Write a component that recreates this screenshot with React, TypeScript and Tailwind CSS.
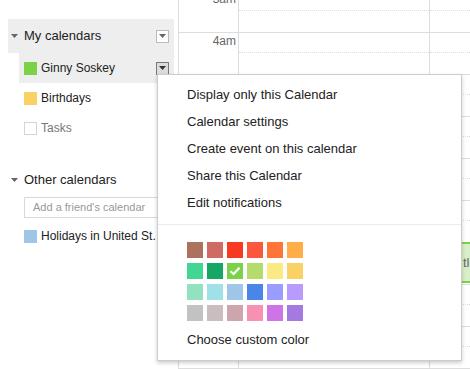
const swatches = [
  ["#ac725e", "#d06b64", "#f83a22", "#fa573c", "#ff7537", "#ffad46"],
  ["#42d692", "#16a765", "#7bd148", "#b3dc6c", "#fbe983", "#fad165"],
  ["#92e1c0", "#9fe1e7", "#9fc6e7", "#4986e7", "#9a9cff", "#b99aff"],
  ["#c2c2c2", "#cabdbf", "#cca6ac", "#f691b2", "#cd74e6", "#a47ae2"],
];

const menuItems = [
  "Display only this Calendar",
  "Calendar settings",
  "Create event on this calendar",
  "Share this Calendar",
  "Edit notifications",
];

const hours = ["3am", "4am", "5am", "6am", "7am", "8am", "9am", "10am", "11am", "12pm"];

function Caret() {
  return (
    <svg width="7" height="4" viewBox="0 0 7 4" className="shrink-0">
      <path d="M0 0h7L3.5 4z" fill="#666" />
    </svg>
  );
}

function DropButton({ active }: { active?: boolean }) {
  return (
    <div
      className={
        active
          ? "flex h-[13px] w-[13px] items-center justify-center border border-[#777] bg-[#dcdcdc]"
          : "flex h-[13px] w-[13px] items-center justify-center border border-[#bbb] bg-white"
      }
    >
      <svg width="7" height="4" viewBox="0 0 7 4">
        <path d="M0 0h7L3.5 4z" fill={active ? "#333" : "#666"} />
      </svg>
    </div>
  );
}

function CalRow({
  color,
  label,
  active,
  muted,
}: {
  color?: string;
  label: string;
  active?: boolean;
  muted?: boolean;
}) {
  return (
    <div
      className={
        active
          ? "ml-[11px] flex h-[30px] items-center bg-[#eeeeee] pl-[5px] pr-[5px]"
          : "ml-[11px] flex h-[30px] items-center pl-[5px] pr-[5px]"
      }
    >
      {color ? (
        <div className="h-[13px] w-[13px] shrink-0" style={{ backgroundColor: color }} />
      ) : (
        <div className="h-[13px] w-[13px] shrink-0 border border-[#d4d4d4] bg-white" />
      )}
      <span
        className={
          muted
            ? "ml-[4px] flex-1 overflow-hidden whitespace-nowrap text-[12px] text-[#777]"
            : "ml-[4px] flex-1 overflow-hidden whitespace-nowrap text-[12px] text-[#222]"
        }
      >
        {label}
      </span>
      {active && <DropButton active />}
    </div>
  );
}

function Sidebar() {
  return (
    <div className="w-[178px] shrink-0 pt-[19px]">
      <div className="ml-[8px] w-[166px]">
        <div className="flex h-[34px] items-center bg-[#eeeeee] pl-[3px] pr-[5px]">
          <Caret />
          <span className="ml-[6px] flex-1 text-[13px] text-[#222]">My calendars</span>
          <DropButton />
        </div>
        <CalRow color="#7bd148" label="Ginny Soskey" active />
        <CalRow color="#fad165" label="Birthdays" />
        <CalRow label="Tasks" muted />

        <div className="mt-[20px] flex h-[34px] items-center pl-[3px]">
          <Caret />
          <span className="ml-[6px] text-[13px] text-[#222]">Other calendars</span>
        </div>
        <div className="ml-[16px] flex h-[21px] w-[146px] items-center border border-[#d9d9d9] pl-[8px] text-[11px] text-[#999]">
          Add a friend's calendar
        </div>
        <div className="mt-[3px]">
          <CalRow color="#9fc6e7" label="Holidays in United St." />
        </div>
      </div>
    </div>
  );
}

function Grid() {
  return (
    <div className="relative -mt-[10px] flex-1 border-l border-[#dddddd]">
      {hours.map((h) => (
        <div key={h} className="flex h-[42px] border-t border-[#dddddd]">
          <div className="w-[60px] shrink-0 border-r border-[#dddddd] pr-[2px] pt-[1px] text-right text-[12px] leading-[14px] text-[#666]">
            {h}
          </div>
          <div className="w-[191px] shrink-0 border-r border-[#dddddd]">
            <div className="h-[20px] border-b border-dotted border-[#dddddd]" />
          </div>
          <div className="flex-1">
            <div className="h-[20px] border-b border-dotted border-[#dddddd]" />
          </div>
        </div>
      ))}
    </div>
  );
}

function Menu() {
  return (
    <div className="absolute left-[157px] top-[74px] w-[305px] border border-[rgba(0,0,0,0.2)] bg-white pt-[6px] pb-[7px] shadow-[0_2px_4px_rgba(0,0,0,0.2)]">
      {menuItems.map((m) => (
        <div key={m} className="flex h-[27px] items-center pl-[29px] text-[13px] text-[#222]">
          {m}
        </div>
      ))}
      <div className="mt-[8px] h-px bg-[#ebebeb]" />
      <div className="mt-[17px] grid w-fit grid-cols-6 gap-x-[4px] gap-y-[5px] pl-[29px]">
        {swatches.flat().map((c, i) => (
          <div
            key={c}
            className="flex h-[16px] w-[16px] items-center justify-center"
            style={{ backgroundColor: c }}
          >
            {i === 8 && (
              <svg width="12" height="10" viewBox="0 0 12 10">
                <path d="M1.5 5.2 4.6 8 10.5 1.8" fill="none" stroke="#fff" strokeWidth="2.2" />
              </svg>
            )}
          </div>
        ))}
      </div>
      <div className="mt-[5px] flex h-[27px] items-center pl-[29px] text-[13px] text-[#222]">
        Choose custom color
      </div>
    </div>
  );
}

export default function App() {
  return (
    <div
      className="relative h-[369px] w-[470px] overflow-hidden bg-white"
      style={{ fontFamily: '"Liberation Sans", Arial, sans-serif' }}
    >
      <div className="flex h-full">
        <Sidebar />
        <Grid />
      </div>
      <div className="absolute left-[462px] top-[242px] flex h-[41px] w-[60px] items-center border-y-2 border-[#7bd148] bg-[#d8efc9] pl-[1px] text-[13px] text-[#666]">
        tle
      </div>
      <Menu />
    </div>
  );
}
